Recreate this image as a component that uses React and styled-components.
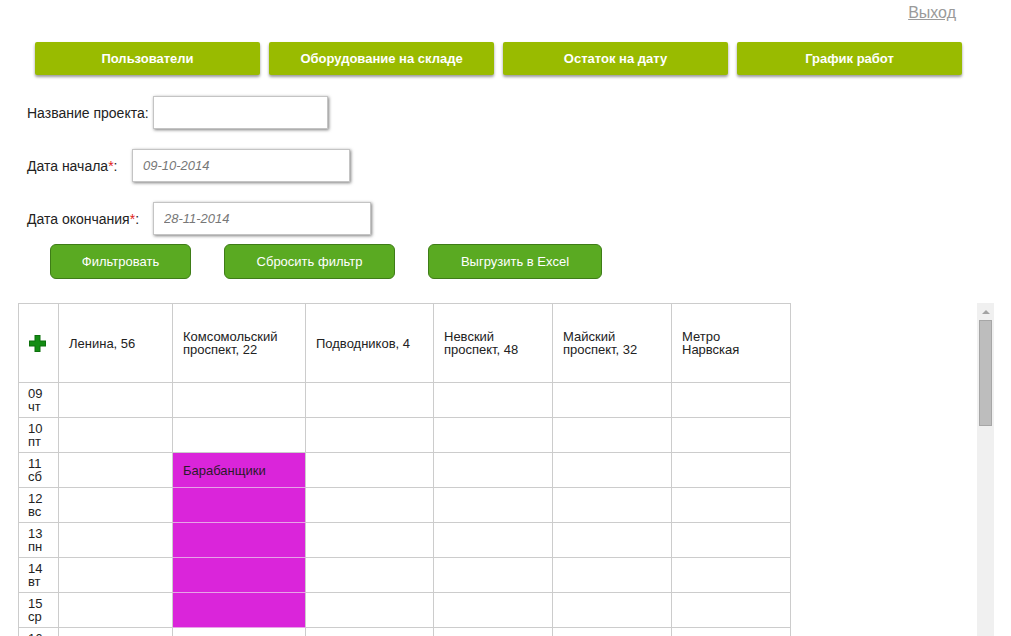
import React from 'react';
import styled, { createGlobalStyle } from 'styled-components';

const GlobalStyle = createGlobalStyle`
  html, body { margin: 0; padding: 0; background: #fff; overflow: hidden; }
  body { font-family: "Liberation Sans", Arial, sans-serif; color: #222; }
  * { box-sizing: border-box; }
`;

const Page = styled.div`
  width: 1011px;
  height: 636px;
  overflow: hidden;
`;

const TopBar = styled.div`
  display: flex;
  justify-content: flex-end;
  height: 42px;
  padding: 4px 55px 0 0;
`;

const LogoutLink = styled.a`
  font-size: 16px;
  line-height: 18px;
  color: #9a9a9a;
  text-decoration: underline;
  cursor: pointer;
`;

const Nav = styled.nav`
  display: flex;
  gap: 9px;
  padding-left: 35px;
`;

const NavButton = styled.button`
  width: 225px;
  height: 33px;
  border: none;
  border-radius: 2px;
  background: #99bb00;
  color: #fff;
  font-family: "Liberation Sans", Arial, sans-serif;
  font-weight: bold;
  font-size: 13px;
  box-shadow: 0 2px 3px rgba(0, 0, 0, 0.4);
  cursor: pointer;
`;

const Form = styled.div`
  display: flex;
  flex-direction: column;
  gap: 20px;
  margin-top: 21px;
  padding-left: 27px;
`;

const FieldRow = styled.div`
  display: flex;
  align-items: center;
  height: 33px;
`;

const Label = styled.label`
  width: ${(p) => p.$width}px;
  font-size: 14px;
  color: #222;
  white-space: nowrap;
`;

const Required = styled.span`
  color: #e02020;
`;

const TextInput = styled.input`
  width: ${(p) => p.$width}px;
  height: 33px;
  border: 1px solid #c4c4c4;
  box-shadow: 1px 1px 3px rgba(0, 0, 0, 0.5);
  padding: 0 10px;
  font-family: "Liberation Sans", Arial, sans-serif;
  font-size: 13px;
  font-style: italic;
  color: #777;
  outline: none;
  background: #fff;
`;

const Actions = styled.div`
  display: flex;
  gap: 33px;
  margin-top: 9px;
  padding-left: 50px;
`;

const ActionButton = styled.button`
  width: ${(p) => p.$width}px;
  height: 35px;
  border: 1px solid #3e7c17;
  border-radius: 6px;
  background: #5aaa22;
  color: #fff;
  font-family: "Liberation Sans", Arial, sans-serif;
  font-size: 13px;
  cursor: pointer;
`;

const TableArea = styled.div`
  display: flex;
  margin: 24px 0 0 18px;
  width: 976px;
  height: 333px;
`;

const TableViewport = styled.div`
  flex: 1;
  overflow: hidden;
`;

const ScrollTrack = styled.div`
  width: 17px;
  flex: none;
  background: #f0f0f0;
  display: flex;
  flex-direction: column;
  align-items: center;
`;

const ScrollArrow = styled.div`
  height: 17px;
  width: 17px;
  display: flex;
  align-items: center;
  justify-content: center;

  &::before {
    content: '';
    border-left: 4px solid transparent;
    border-right: 4px solid transparent;
    border-bottom: 4px solid #a3a3a3;
  }
`;

const ScrollThumb = styled.div`
  width: 13px;
  height: 106px;
  background: #bdbdbd;
  border: 1px solid #a6a6a6;
`;

const Table = styled.table`
  border-collapse: collapse;
  table-layout: fixed;
  width: 772px;
  font-size: 13px;
  color: #222;
`;

const HeadCell = styled.th`
  height: 79px;
  border: 1px solid #cccccc;
  padding: 0 10px;
  text-align: left;
  font-weight: normal;
  line-height: 13px;
  vertical-align: middle;
`;

const PlusCell = styled.th`
  height: 79px;
  border: 1px solid #cccccc;
  padding: 0 0 0 10px;
  text-align: left;
  vertical-align: middle;
`;

const DayCell = styled.td`
  height: 35px;
  border: 1px solid #cccccc;
  padding: 0 0 0 9px;
  line-height: 13px;
  vertical-align: middle;
`;

const Cell = styled.td`
  height: 35px;
  border: 1px solid #cccccc;
  padding: 0 10px;
  vertical-align: middle;
  background: ${(p) => (p.$busy ? '#da25da' : '#fff')};
  border-bottom-color: ${(p) => (p.$busy ? '#e7a3e7' : '#cccccc')};
  color: #2a1a2a;
`;

const PlusIcon = () => (
  <svg width="17" height="17" viewBox="0 0 17 17" style={{ display: 'block' }}>
    <path d="M5.5 0h6v5.5H17v6h-5.5V17h-6v-5.5H0v-6h5.5z" fill="#0c700c" />
    <path d="M6.5 1h4v5.5H16v4h-5.5V16h-4v-5.5H1v-4h5.5z" fill="#138c13" />
  </svg>
);

const columns = [
  ['Ленина, 56'],
  ['Комсомольский', 'проспект, 22'],
  ['Подводников, 4'],
  ['Невский', 'проспект, 48'],
  ['Майский', 'проспект, 32'],
  ['Метро', 'Нарвская'],
];
const widths = [40, 114, 133, 128, 119, 119, 119];
const weekdays = ['вс', 'пн', 'вт', 'ср', 'чт', 'пт', 'сб'];

const days = [];
for (let i = 0; i < 8; i++) {
  const d = new Date(2014, 9, 9 + i);
  days.push({ num: String(d.getDate()).padStart(2, '0'), wd: weekdays[d.getDay()], idx: i });
}

export default function App() {
  return (
    <Page>
      <GlobalStyle />
      <TopBar>
        <LogoutLink>Выход</LogoutLink>
      </TopBar>
      <Nav>
        <NavButton>Пользователи</NavButton>
        <NavButton>Оборудование на складе</NavButton>
        <NavButton>Остаток на дату</NavButton>
        <NavButton>График работ</NavButton>
      </Nav>
      <Form>
        <FieldRow>
          <Label $width={126}>Название проекта:</Label>
          <TextInput $width={175} />
        </FieldRow>
        <FieldRow>
          <Label $width={105}>
            Дата начала<Required>*</Required>:
          </Label>
          <TextInput $width={218} defaultValue="09-10-2014" />
        </FieldRow>
        <FieldRow>
          <Label $width={126}>
            Дата окончания<Required>*</Required>:
          </Label>
          <TextInput $width={218} defaultValue="28-11-2014" />
        </FieldRow>
      </Form>
      <Actions>
        <ActionButton $width={141}>Фильтровать</ActionButton>
        <ActionButton $width={171}>Сбросить фильтр</ActionButton>
        <ActionButton $width={174}>Выгрузить в Excel</ActionButton>
      </Actions>
      <TableArea>
        <TableViewport>
          <Table>
            <colgroup>
              {widths.map((w, i) => (
                <col key={i} style={{ width: w }} />
              ))}
            </colgroup>
            <thead>
              <tr>
                <PlusCell>
                  <PlusIcon />
                </PlusCell>
                {columns.map((lines, i) => (
                  <HeadCell key={i}>
                    {lines.map((l, j) => (
                      <React.Fragment key={j}>
                        {j > 0 && <br />}
                        {l}
                      </React.Fragment>
                    ))}
                  </HeadCell>
                ))}
              </tr>
            </thead>
            <tbody>
              {days.map((d) => {
                const busy = d.idx >= 2 && d.idx <= 6;
                return (
                  <tr key={d.idx}>
                    <DayCell>
                      {d.num}
                      <br />
                      {d.wd}
                    </DayCell>
                    {columns.map((_, c) => (
                      <Cell key={c} $busy={c === 1 && busy}>
                        {c === 1 && d.idx === 2 ? 'Барабанщики' : ''}
                      </Cell>
                    ))}
                  </tr>
                );
              })}
            </tbody>
          </Table>
        </TableViewport>
        <ScrollTrack>
          <ScrollArrow />
          <ScrollThumb />
        </ScrollTrack>
      </TableArea>
    </Page>
  );
}
